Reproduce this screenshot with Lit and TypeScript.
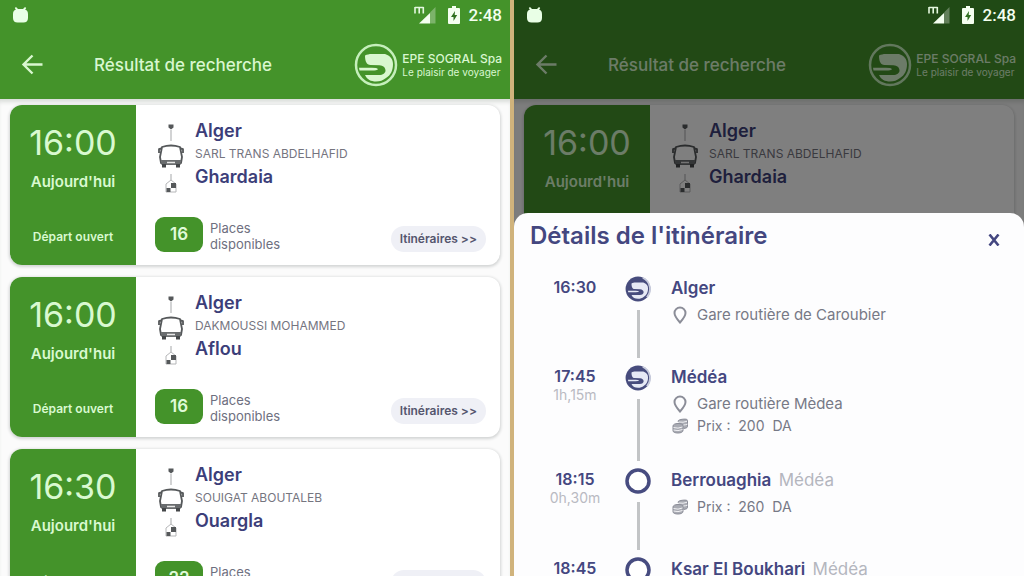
import { LitElement, html, css, svg, nothing } from "lit";
import { customElement, property } from "lit/decorators.js";
import { classMap } from "lit/directives/class-map.js";

interface Trip {
  time: string;
  from: string;
  to: string;
  company: string;
  seats: number;
}

interface Stop {
  time: string;
  duration?: string;
  name: string;
  province?: string;
  station?: string;
  price?: number;
  hub: boolean;
}

const TRIPS: Trip[] = [
  { time: "16:00", from: "Alger", to: "Ghardaia", company: "SARL TRANS ABDELHAFID", seats: 16 },
  { time: "16:00", from: "Alger", to: "Aflou", company: "DAKMOUSSI MOHAMMED", seats: 16 },
  { time: "16:30", from: "Alger", to: "Ouargla", company: "SOUIGAT ABOUTALEB", seats: 22 },
];

const STOPS: Stop[] = [
  { time: "16:30", name: "Alger", station: "Gare routière de Caroubier", hub: true },
  { time: "17:45", duration: "1h,15m", name: "Médéa", station: "Gare routière Mèdea", price: 200, hub: true },
  { time: "18:15", duration: "0h,30m", name: "Berrouaghia", province: "Médéa", price: 260, hub: false },
  { time: "18:45", name: "Ksar El Boukhari", province: "Médéa", hub: false },
];

const brandSwoosh = svg`
  <path d="M11 12.500c2-1 4-1.500 7-1.500h13c5 1.500 8 5 8 10 0 6-2 11-7 14-3 2.500-6 3.500-10 3.500-5 0-9-2-11-6.500h14c4 0 6.500-2 6.500-4.500 0-3-2.500-5-6-5.200l-9-.3c-4 0-5.500-4-5.500-9.500z"/>
  <path d="M5 24.800h13q5 0 6 1.400-1 1.300-6 1.300H5.500z"/>`;

@customElement("status-bar")
export class StatusBar extends LitElement {
  static styles = css`
    :host {
      display: flex;
      align-items: center;
      height: 30px;
      padding: 0 8px 0 12px;
      color: #f4fff0;
      font: 500 17px/30px Roboto, sans-serif;
    }
    .spacer { flex: 1; }
    .signal { margin-right: 12px; }
    .battery { margin-right: 9px; }
    svg { display: block; }
  `;
  render() {
    return html`
      <svg width="17" height="18" viewBox="0 0 17 18" fill="#e9ffe6" aria-hidden="true">
        <path d="M4 1l2 2h5l2-2 1.200 1-1 1.800c2 .6 2.800 2 2.800 4.400V12c0 3-1.800 4.500-4.500 4.500h-6C2.800 16.500 1 15 1 12V8.200c0-2.400.8-3.800 2.800-4.400L2.800 2z"/>
      </svg>
      <span class="spacer"></span>
      <svg class="signal" width="22" height="20" viewBox="0 0 22 20" fill="none" aria-hidden="true">
        <path d="M21.500 2v16.500H16V7.500z" fill="#fff" opacity=".3"/>
        <path d="M16 8v10.500H5z" fill="#f4fff0"/>
        <path d="M1 8.500V2M1 2.500h8.500M5.200 2v6.500M9.300 2v6.500" stroke="#e4f8df" stroke-width="1.600"/>
      </svg>
      <svg class="battery" width="12" height="20" viewBox="0 0 12 20" aria-hidden="true">
        <path d="M4 1h4v2h3a1 1 0 0 1 1 1v14a1 1 0 0 1-1 1H1a1 1 0 0 1-1-1V4a1 1 0 0 1 1-1h3z" fill="#f4fff0"/>
        <path d="M7 6L3 12h2.500v4L9.200 10H6.700z" fill="#2f7020"/>
      </svg>
      <span>2:48</span>
    `;
  }
}

@customElement("app-bar")
export class AppBar extends LitElement {
  static styles = css`
    :host {
      display: flex;
      align-items: center;
      height: 69px;
      padding: 0 8px 0 20px;
      box-sizing: border-box;
      overflow: hidden;
      color: #d9f7d0;
      background: #44932a;
      white-space: nowrap;
    }
    .back {
      display: block;
      padding: 0;
      border: 0;
      color: inherit;
      background: none;
    }
    .title {
      flex: 1;
      margin: 0 0 0 50px;
      font-size: 17px;
      line-height: 24px;
      font-weight: 500;
    }
    .brand { display: flex; align-items: center; gap: 4px; }
    .words { display: flex; flex-direction: column; }
    .name { font-size: 12px; line-height: 15px; font-weight: 500; }
    .motto { font-size: 10px; line-height: 13px; font-weight: 400; }
    svg { display: block; }
  `;
  render() {
    return html`
      <button class="back" aria-label="Retour">
        <svg width="24" height="24" viewBox="0 0 24 24" fill="none" stroke="currentColor" stroke-width="2.400">
          <path d="M22.500 11.500H4M12.500 2.500l-9 9 9 9"/>
        </svg>
      </button>
      <h1 class="title">Résultat de recherche</h1>
      <div class="brand">
        <svg width="44" height="44" viewBox="0 0 44 44" fill="#d9f7d0" aria-hidden="true">
          <circle cx="22" cy="22" r="20" fill="none" stroke="#c5efbb" stroke-width="2.500"/>
          ${brandSwoosh}
        </svg>
        <div class="words">
          <span class="name">EPE SOGRAL Spa</span>
          <span class="motto">Le plaisir de voyager</span>
        </div>
      </div>
    `;
  }
}

@customElement("trip-card")
export class TripCard extends LitElement {
  @property({ attribute: false }) trip!: Trip;

  static styles = css`
    :host {
      flex: none;
      display: flex;
      min-height: 160px;
      border-radius: 12px;
      background: #fff;
      box-shadow: 0 1px 3px 1px #d2d4d4;
    }
    .depart {
      flex: none;
      display: flex;
      flex-direction: column;
      align-items: center;
      width: 126px;
      padding: 19px 0 18px;
      box-sizing: border-box;
      border-radius: 12px 0 0 12px;
      color: #d9f9d0;
      background: #44932a;
    }
    .time { font-size: 34px; line-height: 38px; }
    .day { margin-top: 10px; font-size: 15px; line-height: 20px; font-weight: 600; }
    .status { margin-top: auto; font-size: 12px; line-height: 20px; font-weight: 600; }
    .main {
      flex: 1;
      min-width: 0;
      display: flex;
      flex-direction: column;
      justify-content: space-between;
      padding: 14px 14px 13px 19px;
    }
    .route { display: flex; gap: 8px; }
    .cities { line-height: 23px; }
    .city { font-size: 18px; font-weight: 600; color: #3c3e79; }
    .company { font-size: 12px; color: #75757f; }
    .foot { display: flex; align-items: flex-end; }
    .seats {
      width: 48px;
      border-radius: 9px;
      color: #e0fbd9;
      background: #44932a;
      font-size: 17px;
      line-height: 35px;
      font-weight: 600;
      text-align: center;
    }
    .places { flex: 1; margin-left: 7px; font-size: 13px; line-height: 16px; color: #6e6f80; }
    .more {
      padding: 0 9px;
      border: 0;
      border-radius: 13px;
      color: #55566e;
      background: #eff0f6;
      font: 600 12px/26px Inter, sans-serif;
    }
    svg { display: block; }
  `;
  render() {
    const t = this.trip;
    return html`
      <div class="depart">
        <span class="time">${t.time}</span>
        <span class="day">Aujourd'hui</span>
        <span class="status">Départ ouvert</span>
      </div>
      <div class="main">
        <div class="route">
          <svg width="32" height="76" viewBox="0 0 32 76" fill="none" stroke="#55585a" aria-hidden="true">
            <path d="M13.500 5.500h5v3l-2.500 2-2.500-2z" fill="#55585a" stroke="none"/>
            <path d="M16 11v11M16 55v6" stroke="#c4c5c6" stroke-width="1.500"/>
            <path d="M7 28q9-3 18 0l2 10-1 6H6l-1-6zM7 29l-3 1v4M25 29l3 1v4" stroke-width="1.800" stroke-linejoin="round"/>
            <path d="M6 41h20l-.5 5H6.500z" fill="#696c6e" stroke="none"/>
            <path d="M7 45h4v3.500H7zM21 45h4v3.500h-4z" fill="#444749" stroke="none"/>
            <path d="M12 43.500h8" stroke="#e8e8e8" stroke-width="1.500"/>
            <path d="M11 65l5-4 5 4v8H11z" stroke="#b5b6b8"/>
            <path d="M16 64h5v5h-5zM11.500 69h4v4h-4z" fill="#55585a" stroke="none"/>
          </svg>
          <div class="cities">
            <div class="city">${t.from}</div>
            <div class="company">${t.company}</div>
            <div class="city">${t.to}</div>
          </div>
        </div>
        <div class="foot">
          <span class="seats">${t.seats}</span>
          <span class="places">Places<br />disponibles</span>
          <button class="more">Itinéraires &gt;&gt;</button>
        </div>
      </div>
    `;
  }
}

@customElement("itinerary-sheet")
export class ItinerarySheet extends LitElement {
  static styles = css`
    :host {
      display: block;
      padding: 8px 16px 0;
      border-radius: 14px 14px 0 0;
      color: #444780;
      background: #fdfdfe;
    }
    .head { display: flex; align-items: center; justify-content: space-between; margin-bottom: 25px; }
    .heading { margin: 0; font-size: 24px; line-height: 30px; font-weight: 600; }
    .close { display: block; padding: 8px 8px 0; border: 0; color: inherit; background: none; }
    .stops { margin: 0; padding: 0; list-style: none; }
    .stop {
      display: grid;
      grid-template-columns: 90px 36px 1fr;
      min-height: 89px;
    }
    .when { text-align: center; font-size: 16px; line-height: 23px; font-weight: 600; }
    .lasted { font-size: 14px; line-height: 14px; font-weight: 400; color: #b9bac2; }
    .track { display: flex; flex-direction: column; align-items: center; }
    .line { flex: 1; width: 3px; margin: 8px 0 7px; background: #c2c4c6; }
    .info { padding: 0 0 31px 15px; }
    .place { margin-bottom: 4px; font-size: 17px; line-height: 24px; font-weight: 600; }
    .province { margin-left: 3px; font-weight: 400; color: #b4b6be; }
    .detail { display: flex; align-items: center; gap: 8px; line-height: 22px; color: #777986; white-space: pre; }
    .station { font-size: 15px; }
    .price { font-size: 14px; }
    svg { display: block; }
  `;

  private node(hub: boolean) {
    return hub
      ? html`<svg width="26" height="26" viewBox="0 0 44 44" aria-hidden="true">
          <circle cx="22" cy="22" r="21" fill="#474c7d"/>
          <path d="M30 3a21 21 0 0 1 7 33" fill="none" stroke="#c9cddd" stroke-width="3"/>
          <g fill="#e6e9f5">${brandSwoosh}</g>
        </svg>`
      : html`<svg width="26" height="26" viewBox="0 0 26 26" aria-hidden="true">
          <circle cx="13" cy="13" r="11" fill="#fff" stroke="#474c80" stroke-width="3.500"/>
        </svg>`;
  }

  render() {
    return html`
      <div class="head">
        <h2 class="heading">Détails de l'itinéraire</h2>
        <button class="close" aria-label="Fermer">
          <svg width="12" height="12" viewBox="0 0 12 12" fill="none" stroke="currentColor" stroke-width="2.600">
            <path d="M1.500 .5l9 11M10.500 .5l-9 11"/>
          </svg>
        </button>
      </div>
      <ol class="stops">
        ${STOPS.map(
          (s) => html`<li class="stop">
            <div class="when">
              <div>${s.time}</div>
              ${s.duration ? html`<div class="lasted">${s.duration}</div>` : nothing}
            </div>
            <div class="track">${this.node(s.hub)}<span class="line"></span></div>
            <div class="info">
              <div class="place">${s.name}${s.province ? html` <span class="province">${s.province}</span>` : nothing}</div>
              ${s.station
                ? html`<div class="detail station"><svg width="18" height="18" viewBox="0 0 18 18" fill="none" stroke="#8b8d98" stroke-width="2" aria-hidden="true"><path d="M9 16.500C5 12 3.500 9.500 3.500 7a5.500 5.500 0 0 1 11 0c0 2.500-1.500 5-5.500 9.500z"/></svg><span>${s.station}</span></div>`
                : nothing}
              ${s.price
                ? html`<div class="detail price"><svg width="18" height="18" viewBox="0 0 18 18" fill="#a9abb3" stroke="#8b8d98" aria-hidden="true"><path d="M7 4.500c0-1.500 2-2 5-2.300s4.500.1 4.500 1.200v6c0 1.200-1.500 1.800-4 2.100"/><path d="M2 9c0-1.500 2-2.500 5-2.500s5 .7 5 2v5c0 1.500-2 2.500-5 2.500s-5-.8-5-2.200z"/><path d="M2.500 10.500q4.500 1.500 9-.5M2.500 13q4.500 1.500 9-.5M8 5q4 .8 8-.7M12.500 8q2.500-.2 4-.9" fill="none" stroke="#f1f1f4"/></svg><span>Prix :  ${s.price}  DA</span></div>`
                : nothing}
            </div>
          </li>`,
        )}
      </ol>
    `;
  }
}

@customElement("phone-screen")
export class PhoneScreen extends LitElement {
  @property({ type: Boolean }) details = false;

  static styles = css`
    :host {
      position: relative;
      display: block;
      min-width: 0;
      overflow: hidden;
      background: #fbfbfb;
    }
    .status { position: relative; background: #44932a; }
    .status.dimmed { background: #204a15; }
    .body { position: relative; }
    .list {
      display: flex;
      flex-direction: column;
      gap: 12px;
      padding: 6px 10px;
      box-shadow: inset 0 5px 4px -2px #d9dcd9;
    }
    .shade { position: absolute; inset: 0; background: rgba(0, 0, 0, 0.5); }
    .sheet { position: absolute; top: 37%; left: 0; right: 0; bottom: 0; }
  `;
  render() {
    const trips = this.details ? TRIPS.slice(0, 1) : TRIPS;
    return html`
      <status-bar class=${classMap({ status: true, dimmed: this.details })}></status-bar>
      <div class="body">
        <app-bar></app-bar>
        <div class="list">${trips.map((t) => html`<trip-card .trip=${t}></trip-card>`)}</div>
        ${this.details ? html`<div class="shade"></div>` : nothing}
      </div>
      ${this.details ? html`<itinerary-sheet class="sheet"></itinerary-sheet>` : nothing}
    `;
  }
}

@customElement("app-root")
export class AppRoot extends LitElement {
  static styles = css`
    :host {
      display: grid;
      grid-template-columns: 1fr 4px 1fr;
      height: 100vh;
      overflow: hidden;
      font-family: Inter, "Open Sans", sans-serif;
    }
    .divider { background: #d0b37c; }
  `;
  render() {
    return html`
      <phone-screen></phone-screen>
      <div class="divider"></div>
      <phone-screen details></phone-screen>
    `;
  }
}
